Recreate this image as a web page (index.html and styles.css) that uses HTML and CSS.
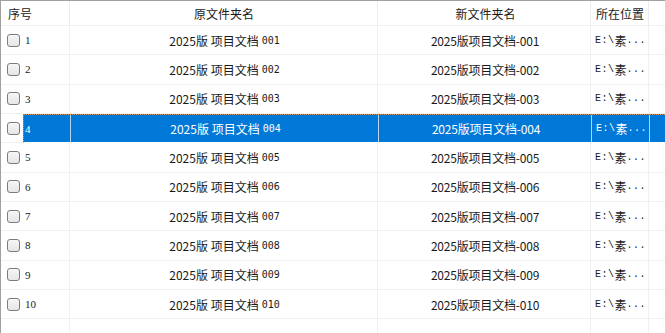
FILE: index.html
```html
<!DOCTYPE html>
<html lang="zh">
<head>
<meta charset="utf-8">
<link rel="stylesheet" href="styles.css">
</head>
<body>
<div class="grid">
  <div class="head">
    <div class="h h-idx">序号</div>
    <div class="h h-orig">原文件夹名</div>
    <div class="h h-new">新文件夹名</div>
    <div class="h h-loc">所在位置</div>
    <div class="h h-fill"></div>
  </div>
  <div class="row"><div class="cb"><span class="box"></span></div><div class="cells"><div class="c num">1</div><div class="c orig">2025版 项目文档 <span class="d">001</span></div><div class="c new">2025版项目文档-001</div><div class="c loc"><span class="m">E:\</span>素<span class="m">...</span></div><div class="c fill"></div></div></div>
  <div class="row"><div class="cb"><span class="box"></span></div><div class="cells"><div class="c num">2</div><div class="c orig">2025版 项目文档 <span class="d">002</span></div><div class="c new">2025版项目文档-002</div><div class="c loc"><span class="m">E:\</span>素<span class="m">...</span></div><div class="c fill"></div></div></div>
  <div class="row"><div class="cb"><span class="box"></span></div><div class="cells"><div class="c num">3</div><div class="c orig">2025版 项目文档 <span class="d">003</span></div><div class="c new">2025版项目文档-003</div><div class="c loc"><span class="m">E:\</span>素<span class="m">...</span></div><div class="c fill"></div></div></div>
  <div class="row selected"><div class="cb"><span class="box"></span></div><div class="cells"><div class="c num">4</div><div class="c orig">2025版 项目文档 <span class="d">004</span></div><div class="c new">2025版项目文档-004</div><div class="c loc"><span class="m">E:\</span>素<span class="m">...</span></div><div class="c fill"></div></div></div>
  <div class="row"><div class="cb"><span class="box"></span></div><div class="cells"><div class="c num">5</div><div class="c orig">2025版 项目文档 <span class="d">005</span></div><div class="c new">2025版项目文档-005</div><div class="c loc"><span class="m">E:\</span>素<span class="m">...</span></div><div class="c fill"></div></div></div>
  <div class="row"><div class="cb"><span class="box"></span></div><div class="cells"><div class="c num">6</div><div class="c orig">2025版 项目文档 <span class="d">006</span></div><div class="c new">2025版项目文档-006</div><div class="c loc"><span class="m">E:\</span>素<span class="m">...</span></div><div class="c fill"></div></div></div>
  <div class="row"><div class="cb"><span class="box"></span></div><div class="cells"><div class="c num">7</div><div class="c orig">2025版 项目文档 <span class="d">007</span></div><div class="c new">2025版项目文档-007</div><div class="c loc"><span class="m">E:\</span>素<span class="m">...</span></div><div class="c fill"></div></div></div>
  <div class="row"><div class="cb"><span class="box"></span></div><div class="cells"><div class="c num">8</div><div class="c orig">2025版 项目文档 <span class="d">008</span></div><div class="c new">2025版项目文档-008</div><div class="c loc"><span class="m">E:\</span>素<span class="m">...</span></div><div class="c fill"></div></div></div>
  <div class="row"><div class="cb"><span class="box"></span></div><div class="cells"><div class="c num">9</div><div class="c orig">2025版 项目文档 <span class="d">009</span></div><div class="c new">2025版项目文档-009</div><div class="c loc"><span class="m">E:\</span>素<span class="m">...</span></div><div class="c fill"></div></div></div>
  <div class="row"><div class="cb"><span class="box"></span></div><div class="cells"><div class="c num">10</div><div class="c orig">2025版 项目文档 <span class="d">010</span></div><div class="c new">2025版项目文档-010</div><div class="c loc"><span class="m">E:\</span>素<span class="m">...</span></div><div class="c fill"></div></div></div>
  <div class="row empty"><div class="cb"></div><div class="cells"><div class="c num"></div><div class="c orig"></div><div class="c new"></div><div class="c loc"></div><div class="c fill"></div></div></div>
</div>
</body>
</html>
```

FILE: styles.css
```css
* { box-sizing: border-box; }
html, body {
  margin: 0;
  padding: 0;
  background: #ffffff;
  overflow: hidden;
}
body {
  width: 665px;
  height: 333px;
  font-family: "Noto Sans CJK SC", "Noto Sans", sans-serif;
  font-size: 12px;
  color: #1a1a1a;
}
.grid {
  height: 333px;
  border-left: 1px solid #a0a0a0;
  border-top: 1px solid #a0a0a0;
  overflow: hidden;
}
.head {
  display: flex;
  height: 25px;
  border-bottom: 1px solid #f0f0f0;
}
.h {
  display: flex;
  align-items: center;
  height: 100%;
  border-right: 1px solid #ececec;
  padding-top: 1px;
  font-size: 12px;
}
.h-idx { width: 69px; padding-left: 7px; }
.h-orig { width: 308px; justify-content: center; padding-left: 1px; }
.h-new { width: 213px; justify-content: center; padding-left: 3px; }
.h-loc { width: 58px; padding-left: 5px; }
.h-fill { flex: 1; border-right: none; }

.row {
  display: flex;
  height: 29.33px;
}
.cb {
  width: 22px;
  display: flex;
  align-items: center;
  padding-left: 6px;
  border-bottom: 1px solid #f0f0f0;
}
.box {
  width: 13px;
  height: 13px;
  border: 1px solid #7c7c7c;
  border-radius: 3px;
  background: linear-gradient(#f6f6f6, #e6e6e6);
}
.cells {
  flex: 1;
  display: flex;
  border-bottom: 1px solid #f0f0f0;
}
.c {
  display: flex;
  align-items: center;
  height: 100%;
  border-right: 1px solid #f0f0f0;
  white-space: nowrap;
}
.num { width: 47px; padding-left: 2px; font-family: "Liberation Serif", serif; font-size: 11px; }
.orig { width: 308px; justify-content: center; padding-left: 2px; }
.new { width: 213px; justify-content: center; padding-left: 2px; letter-spacing: -0.2px; }
.loc { width: 58px; padding-left: 4px; }
.fill { flex: 1; border-right: none; }
.d { font-family: "DejaVu Sans Mono", monospace; font-size: 10px; margin-left: 3px; }
.m { font-family: "Liberation Mono", monospace; font-size: 10px; letter-spacing: 0.5px; }

.selected .cells {
  background: #0078d7;
  color: #ffffff;
  border-top: 1px dotted #c9955e;
  border-left: 1px dotted #c9955e;
  border-bottom: 1px solid #ffffff;
}
.selected .c { border-right-color: #b8d4f0; }
.selected .num { padding-left: 1px; }
```
